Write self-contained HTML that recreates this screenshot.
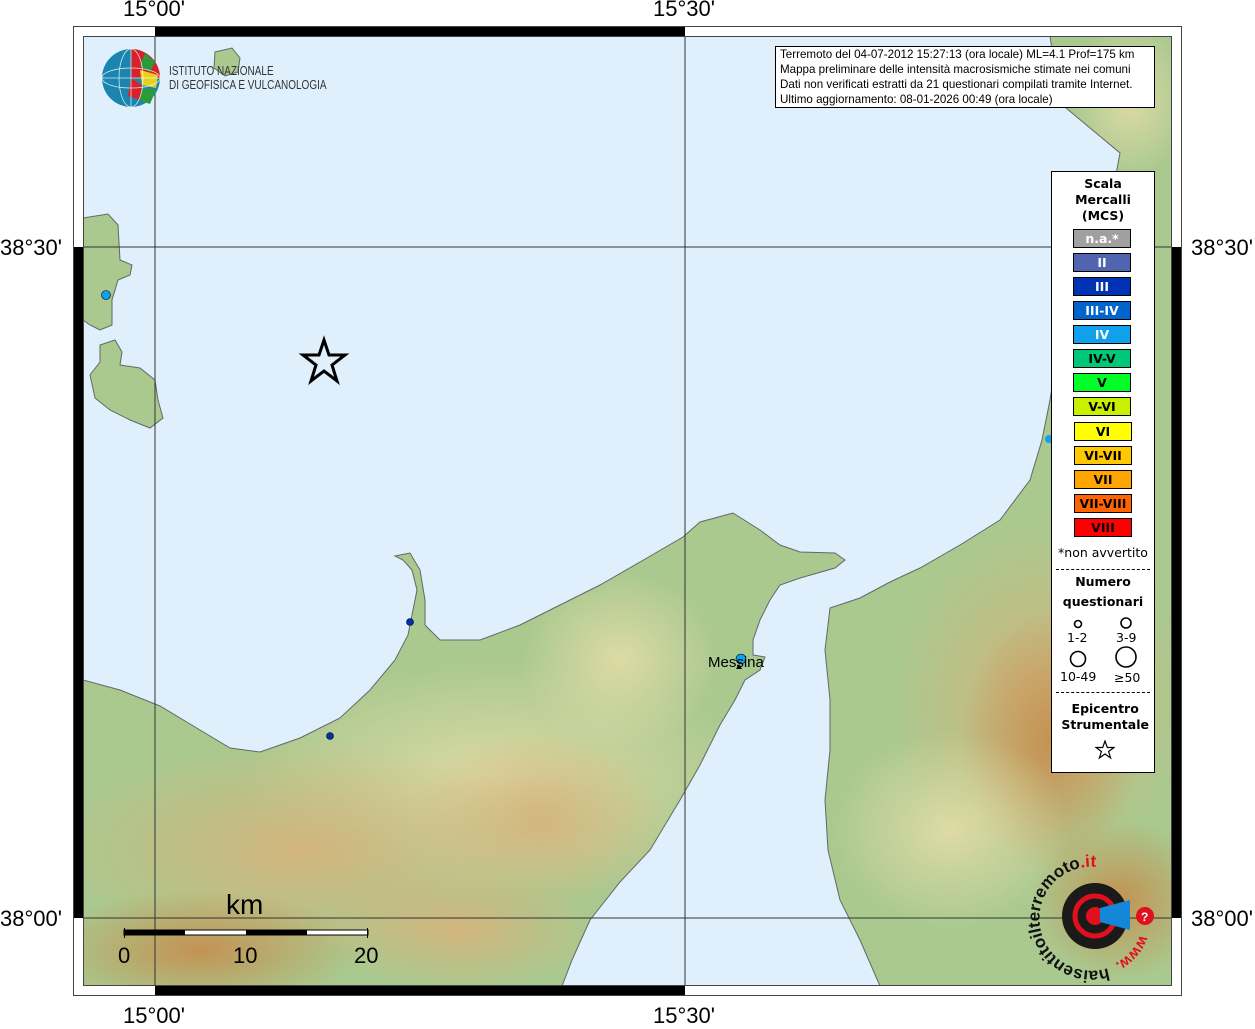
<!DOCTYPE html>
<html><head><meta charset="utf-8"><style>
html,body{margin:0;padding:0;background:#fff;}
body{width:1255px;height:1024px;position:relative;overflow:hidden;font-family:"Liberation Sans",sans-serif;}
.lab{position:absolute;font-size:22px;color:#000;}
</style></head><body>
<svg width="1255" height="1024" style="position:absolute;left:0;top:0" xmlns="http://www.w3.org/2000/svg">
<defs>
<clipPath id="map"><rect x="83" y="36" width="1089" height="950"/></clipPath>
<radialGradient id="tan1" cx="0.5" cy="0.5" r="0.5"><stop offset="0" stop-color="#d4b47c" stop-opacity="0.95"/><stop offset="1" stop-color="#d4b47c" stop-opacity="0"/></radialGradient>
<radialGradient id="br1" cx="0.5" cy="0.5" r="0.5"><stop offset="0" stop-color="#c49050" stop-opacity="0.95"/><stop offset="1" stop-color="#c49050" stop-opacity="0"/></radialGradient>
<radialGradient id="ye1" cx="0.5" cy="0.5" r="0.5"><stop offset="0" stop-color="#e4dca8" stop-opacity="0.9"/><stop offset="1" stop-color="#e4dca8" stop-opacity="0"/></radialGradient>
<clipPath id="land">
<path d="M83,680 L120,690 L160,706 L200,730 L230,748 L260,752 L300,738 L340,718 L370,690 L395,660 L408,635 L413,610 L417,590 L412,570 L403,560 L395,556 L410,553 L420,570 L425,600 L425,625 L440,640 L480,640 L520,625 L560,605 L600,585 L640,562 L683,537 L700,522 L733,513 L760,530 L780,545 L800,552 L835,553 L845,560 L835,568 L800,578 L780,585 L770,600 L760,620 L753,640 L753,655 L765,657 L760,670 L745,680 L735,700 L720,725 L700,765 L680,800 L650,850 L620,882 L590,920 L572,960 L562,986 L83,986 Z"/>
<path d="M1050,36 L1060,103 L1120,153 L1100,260 L1060,340 L1050,400 L1042,440 L1030,480 L1000,520 L960,545 L920,568 L890,582 L860,598 L830,608 L825,650 L830,700 L830,750 L825,800 L828,850 L840,900 L860,940 L880,986 L1172,986 L1172,36 Z"/>
<path d="M83,218 L108,214 L118,225 L120,260 L132,265 L130,275 L118,280 L112,300 L112,325 L100,330 L90,325 L83,320 Z"/>
<path d="M100,345 L115,340 L122,352 L120,365 L140,368 L155,380 L158,400 L163,418 L150,428 L130,420 L110,410 L95,398 L90,375 L100,362 Z"/>
<path d="M215,52 L232,48 L240,58 L238,72 L225,76 L214,68 Z"/>
</clipPath>
</defs>
<rect x="83" y="36" width="1089" height="950" fill="#dff0fc"/>
<g clip-path="url(#land)">
<rect x="83" y="36" width="1089" height="950" fill="#a9c98f"/>
<ellipse cx="500" cy="780" rx="260" ry="120" fill="url(#ye1)"/>
<ellipse cx="300" cy="850" rx="250" ry="110" fill="url(#tan1)"/>
<ellipse cx="540" cy="820" rx="130" ry="90" fill="url(#tan1)"/>
<ellipse cx="200" cy="950" rx="160" ry="60" fill="url(#br1)"/>
<ellipse cx="460" cy="930" rx="140" ry="60" fill="url(#tan1)"/>
<ellipse cx="620" cy="660" rx="100" ry="90" fill="url(#ye1)"/>
<ellipse cx="1040" cy="700" rx="150" ry="180" fill="url(#tan1)"/>
<ellipse cx="1050" cy="740" rx="90" ry="130" fill="url(#br1)"/>
<ellipse cx="1120" cy="900" rx="90" ry="80" fill="url(#br1)"/>
<ellipse cx="950" cy="830" rx="120" ry="100" fill="url(#ye1)"/>
<ellipse cx="1130" cy="100" rx="60" ry="80" fill="url(#ye1)"/>
</g>
<g fill="none" stroke="#666" stroke-width="1" clip-path="url(#map)">
<path d="M83,680 L120,690 L160,706 L200,730 L230,748 L260,752 L300,738 L340,718 L370,690 L395,660 L408,635 L413,610 L417,590 L412,570 L403,560 L395,556 L410,553 L420,570 L425,600 L425,625 L440,640 L480,640 L520,625 L560,605 L600,585 L640,562 L683,537 L700,522 L733,513 L760,530 L780,545 L800,552 L835,553 L845,560 L835,568 L800,578 L780,585 L770,600 L760,620 L753,640 L753,655 L765,657 L760,670 L745,680 L735,700 L720,725 L700,765 L680,800 L650,850 L620,882 L590,920 L572,960 L562,986"/>
<path d="M1050,36 L1060,103 L1120,153 L1100,260 L1060,340 L1050,400 L1042,440 L1030,480 L1000,520 L960,545 L920,568 L890,582 L860,598 L830,608 L825,650 L830,700 L830,750 L825,800 L828,850 L840,900 L860,940 L880,986"/>
<path d="M83,218 L108,214 L118,225 L120,260 L132,265 L130,275 L118,280 L112,300 L112,325 L100,330 L90,325 L83,320"/>
<path d="M100,345 L115,340 L122,352 L120,365 L140,368 L155,380 L158,400 L163,418 L150,428 L130,420 L110,410 L95,398 L90,375 L100,362 Z"/>
<path d="M215,52 L232,48 L240,58 L238,72 L225,76 L214,68 Z"/>
</g>
<g stroke="#333" stroke-width="1">
<line x1="155" y1="36" x2="155" y2="986"/><line x1="685" y1="36" x2="685" y2="986"/>
<line x1="83" y1="247" x2="1172" y2="247"/><line x1="83" y1="918" x2="1172" y2="918"/>
</g>
<rect x="73.5" y="26.5" width="1108" height="969" fill="none" stroke="#444"/>
<rect x="83.5" y="36.5" width="1088" height="949" fill="none" stroke="#444"/>
<rect x="155" y="27" width="530" height="9" fill="#000"/>
<rect x="155" y="986" width="530" height="9" fill="#000"/>
<rect x="74" y="247" width="9" height="671" fill="#000"/>
<rect x="1172" y="247" width="9" height="671" fill="#000"/>
<circle cx="106" cy="295" r="4.5" fill="#10a0f0" stroke="#000" stroke-width=".6"/>
<circle cx="410" cy="622" r="3.5" fill="#0030b0" stroke="#000" stroke-width=".6"/>
<circle cx="330" cy="736" r="3.5" fill="#0030b0" stroke="#000" stroke-width=".6"/>
<circle cx="741" cy="659" r="5" fill="#10a0f0" stroke="#000" stroke-width=".6"/>
<circle cx="1049" cy="439" r="4" fill="#10a0f0"/>
<path d="M736,669 l3,-5 l3,5z" fill="#000"/>
<text x="708" y="667" font-size="15" font-family="Liberation Sans,sans-serif">Messina</text>
<path d="M324,340 L329,355 L345,355 L332,365 L337,381 L324,371 L311,381 L316,365 L303,355 L319,355 Z" fill="none" stroke="#000" stroke-width="3"/>
<rect x="124" y="930" width="244" height="5" fill="#fff" stroke="#000"/>
<rect x="124" y="930" width="61" height="5" fill="#000"/>
<rect x="246" y="930" width="61" height="5" fill="#000"/>
<line x1="124.5" y1="928" x2="124.5" y2="938" stroke="#000"/>
<line x1="367.5" y1="928" x2="367.5" y2="938" stroke="#000"/>
<text x="226" y="914" font-size="28" font-family="Liberation Sans,sans-serif">km</text>
<text x="118" y="963" font-size="22" font-family="Liberation Sans,sans-serif">0</text>
<text x="233" y="963" font-size="22" font-family="Liberation Sans,sans-serif">10</text>
<text x="354" y="963" font-size="22" font-family="Liberation Sans,sans-serif">20</text>
<circle cx="131" cy="78" r="29" fill="#1a86b0"/>
<path d="M131,49 A29,29 0 0 1 160,78 L131,78Z" fill="#d5222c"/>
<path d="M145,53 L155,62 L150,72 L140,66Z" fill="#2a9a3a"/>
<path d="M140,70 L158,75 L156,88 L142,85Z" fill="#e8d020"/>
<path d="M142,88 L156,90 L150,104 L138,100Z" fill="#2a9a3a"/>
<path d="M131,78 L142,85 L140,100 L128,96Z" fill="#d5222c"/>
<g stroke="#fff" stroke-width="0.8" fill="none" opacity=".8"><ellipse cx="131" cy="78" rx="12" ry="29"/><ellipse cx="131" cy="78" rx="29" ry="10"/><line x1="102" y1="78" x2="160" y2="78"/><line x1="131" y1="49" x2="131" y2="107"/></g>
<g transform="translate(169,0) scale(0.8,1)"><text x="0" y="75" font-size="12.5" fill="#333" font-family="Liberation Sans,sans-serif">ISTITUTO NAZIONALE</text>
<text x="0" y="89" font-size="12.5" fill="#333" font-family="Liberation Sans,sans-serif">DI GEOFISICA E VULCANOLOGIA</text></g>
<circle cx="1095" cy="916" r="33" fill="#1a1a1a"/>
<circle cx="1095" cy="916" r="20" fill="none" stroke="#e0101e" stroke-width="5"/>
<circle cx="1095" cy="916" r="9" fill="#e0101e"/>
<path d="M1100,908 L1130,900 L1130,930 L1100,922 Z" fill="#1488d8"/>
<circle cx="1145" cy="916" r="9" fill="#e0101e"/>
<text x="1141" y="921" font-size="12" fill="#fff" font-weight="bold" font-family="Liberation Sans,sans-serif">?</text>
<path id="arc" d="M1108,968 A52,52 0 1 1 1140,900" fill="none"/>
<text font-size="17" font-weight="bold" font-family="Liberation Sans,sans-serif" fill="#111"><textPath href="#arc">haisentitoilterremoto<tspan fill="#e0101e">.it</tspan></textPath></text>
<path id="arc2" d="M1140,935 A50,50 0 0 1 1100,968" fill="none"/>
<text font-size="15" font-weight="bold" font-family="Liberation Sans,sans-serif" fill="#e0101e"><textPath href="#arc2">www.</textPath></text>
</svg>
<div class="lab" style="left:123px;top:-4px">15°00'</div>
<div class="lab" style="left:653px;top:-4px">15°30'</div>
<div class="lab" style="left:123px;top:1003px">15°00'</div>
<div class="lab" style="left:653px;top:1003px">15°30'</div>
<div class="lab" style="left:0;top:235px">38°30'</div>
<div class="lab" style="left:1191px;top:235px">38°30'</div>
<div class="lab" style="left:0;top:906px">38°00'</div>
<div class="lab" style="left:1191px;top:906px">38°00'</div>
<div style="position:absolute;left:775px;top:46px;width:380px;height:62px;background:#fff;border:1px solid #000;font-size:11.6px;line-height:15px;padding-left:4px;box-sizing:border-box;white-space:nowrap;font-family:'Liberation Sans',sans-serif;">Terremoto del 04-07-2012 15:27:13 (ora locale) ML=4.1 Prof=175 km<br>Mappa preliminare delle intensità macrosismiche stimate nei comuni<br>Dati non verificati estratti da 21 questionari compilati tramite Internet.<br>Ultimo aggiornamento: 08-01-2026 00:49 (ora locale)</div>
<div style="position:absolute;left:1051px;top:171px;width:104px;height:602px;background:#fff;border:1px solid #000;box-sizing:border-box;font-family:'DejaVu Sans',sans-serif;">
<div style="text-align:center;font-weight:bold;font-size:12.5px;line-height:16px;margin-top:4px;">Scala<br>Mercalli<br>(MCS)</div>
<div style="position:absolute;left:0;top:57px;width:104px;">
<style>.m{position:absolute;left:21px;width:58px;height:19px;border:1px solid #000;box-sizing:border-box;text-align:center;font-weight:bold;font-size:12.5px;line-height:17px;}</style>
<div class="m" style="top:0;background:#a0a0a0;color:#fff">n.a.*</div>
<div class="m" style="top:24px;background:#5064b0;color:#fff">II</div>
<div class="m" style="top:48px;background:#0032b4;color:#fff">III</div>
<div class="m" style="top:72px;background:#0064cc;color:#fff">III-IV</div>
<div class="m" style="top:96px;background:#10a0ec;color:#fff">IV</div>
<div class="m" style="top:120px;background:#00c878;color:#000">IV-V</div>
<div class="m" style="top:144px;background:#00ff28;color:#000">V</div>
<div class="m" style="top:168px;background:#c8f000;color:#000">V-VI</div>
<div class="m" style="top:193px;left:22px;background:#ffff00;color:#000">VI</div>
<div class="m" style="top:217px;left:22px;background:#ffc800;color:#000">VI-VII</div>
<div class="m" style="top:241px;left:22px;background:#ffa500;color:#000">VII</div>
<div class="m" style="top:265px;left:22px;background:#ff6400;color:#000">VII-VIII</div>
<div class="m" style="top:289px;left:22px;background:#ff0000;color:#000">VIII</div>
</div>
<div style="position:absolute;top:373px;width:100%;text-align:center;font-size:12.5px;">*non avvertito</div>
<div style="position:absolute;top:397px;left:4px;right:4px;border-top:1px dashed #000;"></div>
<div style="position:absolute;top:400px;width:100%;text-align:center;font-weight:bold;font-size:12.5px;line-height:20px;">Numero<br>questionari</div>
<svg style="position:absolute;left:0;top:440px" width="104" height="80"><g fill="none" stroke="#000" stroke-width="1.6"><circle cx="26" cy="12" r="3.5"/><circle cx="74" cy="11" r="5"/><circle cx="26" cy="47" r="7.5"/><circle cx="74" cy="45" r="10"/></g>
<g font-size="12.5" font-family="DejaVu Sans,sans-serif"><text x="15" y="30">1-2</text><text x="64" y="30">3-9</text><text x="8" y="69">10-49</text><text x="62" y="70">≥50</text></g></svg>
<div style="position:absolute;top:520px;left:4px;right:4px;border-top:1px dashed #000;"></div>
<div style="position:absolute;top:529px;width:100%;text-align:center;font-weight:bold;font-size:12.5px;line-height:16px;">&nbsp;Epicentro<br>&nbsp;Strumentale</div>
<svg style="position:absolute;left:43px;top:568px" width="20" height="20"><path d="M10,1 L12.3,7.5 L19,7.5 L13.6,11.5 L15.6,18 L10,14 L4.4,18 L6.4,11.5 L1,7.5 L7.7,7.5Z" fill="none" stroke="#000" stroke-width="1.2"/></svg>
</div>
</body></html>
